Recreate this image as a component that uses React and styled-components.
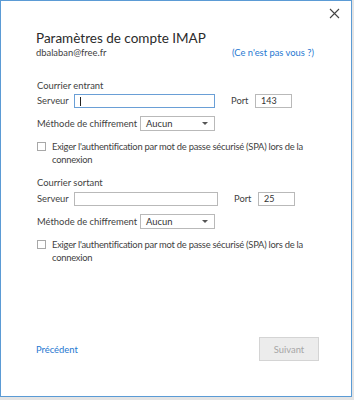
import React from 'react';
import styled, { createGlobalStyle } from 'styled-components';

const GlobalStyle = createGlobalStyle`
    html, body {
        margin: 0;
        padding: 0;
        background: #e4e4e4;
    }
    * {
        box-sizing: border-box;
    }
`

const Window = styled.div`
    width: 352px;
    height: 397px;
    background: #ffffff;
    border: 1px solid #5b9bd5;
    display: flex;
    flex-direction: column;
    font-family: Lato, "Open Sans", sans-serif;
    color: #3f3f3f;
`

const TopBar = styled.div`
    display: flex;
    justify-content: flex-end;
    padding: 6px 11px 0 0;
    height: 24px;
`

const CloseButton = styled.button`
    width: 12px;
    height: 12px;
    padding: 0;
    border: none;
    background: none;
    display: flex;
    align-items: center;
    justify-content: center;
`

const Body = styled.div`
    padding: 5px 36px 0 35px;
    display: flex;
    flex-direction: column;
`

const Title = styled.h1`
    margin: 0;
    font-size: 13.5px;
    font-weight: 400;
    color: #2b2b2b;
    line-height: 16px;
`

const AccountRow = styled.div`
    display: flex;
    justify-content: space-between;
    align-items: center;
    padding-right: 1px;
    font-size: 9.4px;
    line-height: 14px;
`

const Link = styled.a`
    color: #1f78d1;
    text-decoration: none;
    font-size: 9.4px;
`

const Section = styled.div`
    display: flex;
    flex-direction: column;
    margin-top: ${p => p.top}px;
`

const SectionTitle = styled.div`
    font-size: 9.4px;
    line-height: 14px;
    margin-left: 1px;
`

const FieldRow = styled.div`
    display: flex;
    align-items: center;
    margin-top: ${p => p.top || 0}px;
    font-size: 9.4px;
    line-height: 14px;
    white-space: nowrap;
`

const Label = styled.span`
    width: ${p => p.width}px;
    flex-shrink: 0;
    padding-left: ${p => p.indent || 0}px;
`

const TextInput = styled.div`
    width: ${p => p.width}px;
    height: 14px;
    border: 1px solid ${p => (p.focused ? '#6a9fd6' : '#b9b9b9')};
    display: flex;
    align-items: center;
    padding-left: 5px;
    font-size: 9px;
    color: #333333;
    margin-right: ${p => p.gap || 0}px;
`

const Caret = styled.span`
    width: 1px;
    height: 9px;
    background: #222222;
`

const Select = styled.div`
    width: 75px;
    height: 15px;
    border: 1px solid #b9b9b9;
    display: flex;
    align-items: center;
    justify-content: space-between;
    padding: 0 6px 0 5px;
    font-size: 9.4px;
    color: #333333;
`

const Arrow = styled.span`
    width: 0;
    height: 0;
    border-left: 3px solid transparent;
    border-right: 3px solid transparent;
    border-top: 3px solid #555555;
`

const CheckRow = styled.label`
    display: flex;
    align-items: flex-start;
    margin-top: ${p => p.top}px;
    font-size: 9.4px;
    line-height: 13px;
`

const CheckText = styled.span`
    letter-spacing: -0.25px;
`

const Box = styled.span`
    width: 9px;
    height: 9px;
    border: 1px solid #a8a8a8;
    flex-shrink: 0;
    margin: 2px 6px 0 1px;
`

const Footer = styled.div`
    margin-top: auto;
    display: flex;
    justify-content: space-between;
    align-items: center;
    padding: 0 32px 35px 35px;
`

const NextButton = styled.button`
    width: 60px;
    height: 24px;
    border: 1px solid #d4d4d4;
    background: #ececec;
    color: #a6a6a6;
    font-family: Lato, "Open Sans", sans-serif;
    font-size: 9.4px;
    padding: 0;
`

function MailSection(props) {
    return (
        <Section top={props.top}>
            <SectionTitle>{props.title}</SectionTitle>
            <FieldRow top={props.rowGap}>
                <Label width={38} indent={1}>Serveur</Label>
                <TextInput width={props.serverWidth} focused={props.focused} gap={props.portGap}>
                    {props.focused ? <Caret /> : null}
                </TextInput>
                <Label width={24}>Port</Label>
                <TextInput width={37}>{props.port}</TextInput>
            </FieldRow>
            <FieldRow top={8}>
                <Label width={104} indent={1}>Méthode de chiffrement</Label>
                <Select>
                    Aucun
                    <Arrow />
                </Select>
            </FieldRow>
            <CheckRow top={props.checkGap}>
                <Box />
                <CheckText>Exiger l'authentification par mot de passe sécurisé (SPA) lors de la connexion</CheckText>
            </CheckRow>
        </Section>
    )
}

export default function App() {
    return (
        <>
            <GlobalStyle />
            <Window>
                <TopBar>
                    <CloseButton aria-label="Fermer">
                        <svg width="11" height="11" viewBox="0 0 11 11">
                            <path d="M1 1 L10 10 M10 1 L1 10" stroke="#444444" strokeWidth="1.1" />
                        </svg>
                    </CloseButton>
                </TopBar>
                <Body>
                    <Title>Paramètres de compte IMAP</Title>
                    <AccountRow>
                        <span>dbalaban@free.fr</span>
                        <Link href="#">(Ce n'est pas vous ?)</Link>
                    </AccountRow>
                    <MailSection top={19} rowGap={1} checkGap={9} title="Courrier entrant" serverWidth={141} portGap={16} port="143" focused />
                    <MailSection top={10} rowGap={2} checkGap={9} title="Courrier sortant" serverWidth={144} portGap={16} port="25" />
                </Body>
                <Footer>
                    <Link href="#">Précédent</Link>
                    <NextButton disabled>Suivant</NextButton>
                </Footer>
            </Window>
        </>
    )
}
